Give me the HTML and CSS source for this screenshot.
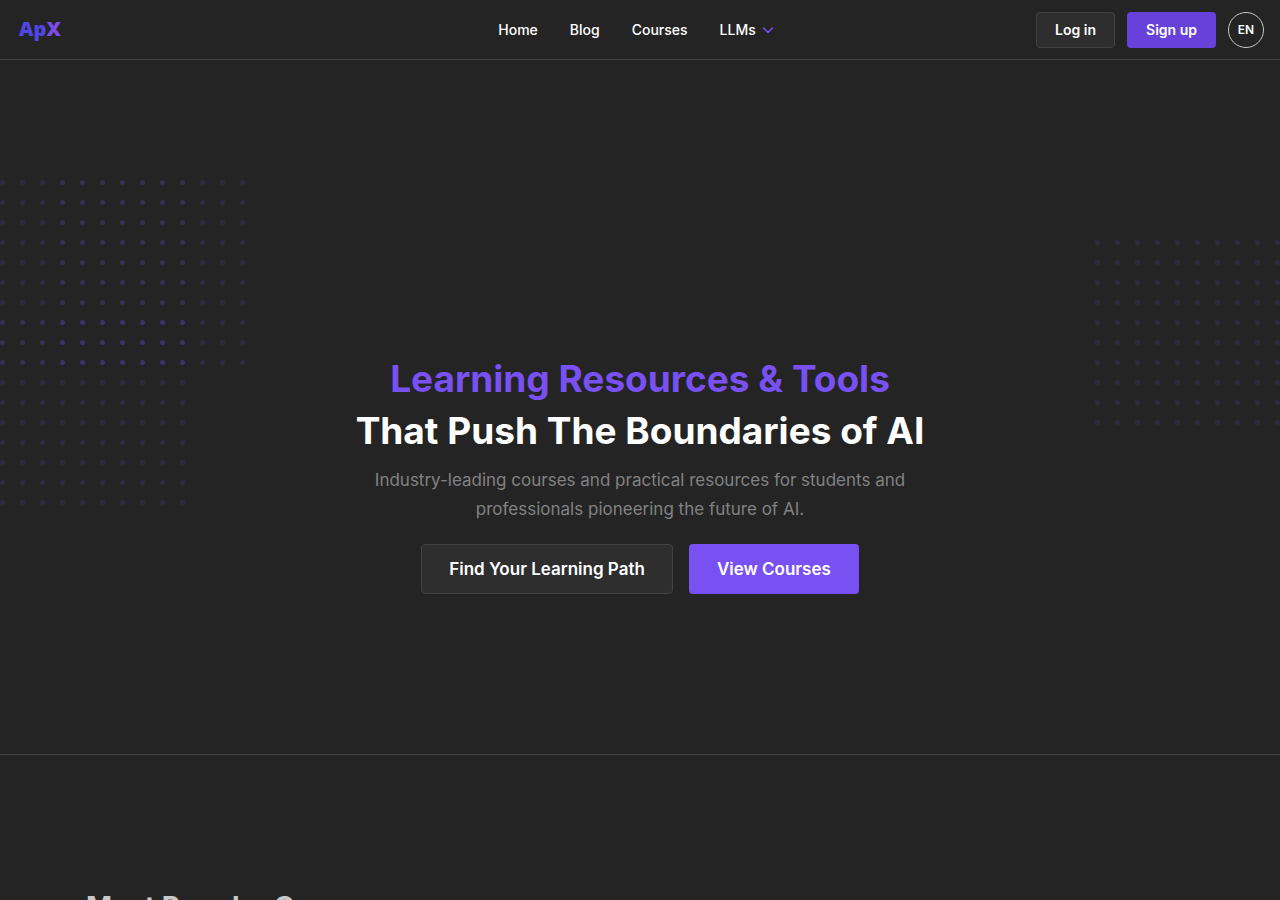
FILE: index.html
```
<!DOCTYPE html>
<html lang="en">

<head>
    <meta charset="UTF-8" />
    <meta name="viewport" content="width=device-width, initial-scale=1.0" />
    <title>ApX - Learning Resources &amp; Tools</title>
    <link rel="stylesheet" href="styles.css">
</head>

<body>
    <header class="header">
        <a class="logo" href="#">Ap<span class="logo-x">X</span></a>
        <nav class="nav">
            <a href="#">Home</a>
            <a href="#">Blog</a>
            <a href="#courses">Courses</a>
            <a class="has-menu" href="#">LLMs
                <svg width="16" height="16" viewBox="0 0 16 16" fill="none" stroke="#7950f2" stroke-width="1.5" stroke-linecap="round" stroke-linejoin="round" aria-hidden="true">
                    <path d="M3.5 6l4.5 4.5l4.5 -4.5" />
                </svg>
            </a>
        </nav>
        <div class="actions">
            <button class="btn btn-default" type="button">Log in</button>
            <button class="btn btn-signup" type="button">Sign up</button>
            <button class="lang" type="button" aria-label="Language: EN">EN</button>
        </div>
    </header>

    <main>
        <section class="hero">
            <!-- background dots -->
            <svg class="dots dots-1" width="185" height="185" aria-hidden="true">
                <defs>
                    <pattern id="dot" width="20" height="20" patternUnits="userSpaceOnUse">
                        <circle cx="2.5" cy="2.5" r="2.5" fill="#7950f2" />
                    </pattern>
                </defs>
                <rect width="185" height="185" fill="url(#dot)" />
            </svg>
            <svg class="dots dots-2" width="185" height="185" aria-hidden="true">
                <rect width="185" height="185" fill="url(#dot)" />
            </svg>
            <svg class="dots dots-3" width="185" height="185" aria-hidden="true">
                <rect width="185" height="185" fill="url(#dot)" />
            </svg>
            <svg class="dots dots-4" width="185" height="185" aria-hidden="true">
                <rect width="185" height="185" fill="url(#dot)" />
            </svg>

            <div class="hero-inner">
                <h1><span class="highlight">Learning Resources &amp; Tools</span><br>That Push The Boundaries of AI</h1>
                <p>Industry-leading courses and practical resources for students and professionals pioneering the future of AI.</p>
                <div class="controls">
                    <button class="btn btn-lg btn-default" type="button">Find Your Learning Path</button>
                    <button class="btn btn-lg btn-primary" type="button">View Courses</button>
                </div>
            </div>
        </section>

        <section class="popular" id="courses">
            <h2>Most Popular Courses</h2>
        </section>
    </main>
</body>

</html>
```
FILE: styles.css
```
* {
    box-sizing: border-box;
}

body {
    margin: 0;
    background-color: #242424;
    color: #fff;
    font-family: Inter, "Liberation Sans", sans-serif;
}

a {
    color: inherit;
    text-decoration: none;
}

button {
    font-family: inherit;
    cursor: pointer;
}

/* header */
.header {
    display: grid;
    grid-template-columns: 1fr auto 1fr;
    align-items: center;
    height: 60px;
    padding: 0 16px;
    border-bottom: 1px solid #424242;
}

.logo {
    justify-self: start;
    padding: 0 0 2px 3px;
    color: #4f46e5;
    font-family: "Noto Sans", sans-serif;
    font-size: 20px;
    font-weight: 900;
    line-height: 28px;
}

.logo-x {
    color: #7c4be8;
}

.nav {
    display: flex;
    align-items: center;
    gap: 32px;
    padding-right: 6px;
    font-size: 14px;
    font-weight: 500;
}

.has-menu {
    display: flex;
    align-items: center;
    gap: 4px;
}

.actions {
    display: flex;
    align-items: center;
    justify-content: flex-end;
    gap: 12px;
}

.btn {
    height: 36px;
    padding: 0 18px;
    border: 1px solid transparent;
    border-radius: 4px;
    color: #fff;
    font-size: 14px;
    font-weight: 600;
}

.btn-default {
    background-color: #2e2e2e;
    border-color: #424242;
}

.btn-signup {
    background-color: #6741d9;
}

.btn-primary {
    background-color: #7950f2;
}

.btn-lg {
    height: 50px;
    padding: 0 27px;
    font-size: 17px;
}

.lang {
    width: 36px;
    height: 36px;
    padding: 0;
    border: 1px solid #c9c9c9;
    border-radius: 50%;
    background: none;
    color: #fff;
    font-size: 12px;
    font-weight: 600;
}

/* hero */
.hero {
    position: relative;
    overflow: hidden;
    padding: 293px 16px 160px;
    border-bottom: 1px solid #424242;
}

.hero-inner {
    position: relative;
    max-width: 600px;
    margin: 0 auto;
    text-align: center;
}

.hero h1 {
    margin: 0;
    font-size: 37px;
    font-weight: 700;
    line-height: 52px;
}

.highlight {
    color: #7950f2;
}

.hero p {
    margin: 9px 0 20px;
    padding: 0 20px;
    color: #828282;
    font-size: 17px;
    line-height: 29px;
}

.controls {
    display: flex;
    justify-content: center;
    gap: 16px;
}

.dots {
    position: absolute;
    opacity: 0.12;
}

.dots-1 {
    top: 120px;
    left: 0;
}

.dots-2 {
    top: 120px;
    left: 60px;
}

.dots-3 {
    top: 260px;
    left: 0;
}

.dots-4 {
    top: 180px;
    right: 0;
}

/* popular courses */
.popular {
    max-width: 1140px;
    margin: 0 auto;
    padding: 134px 16px 80px;
}

.popular h2 {
    margin: 0;
    color: #c9c9c9;
    font-size: 28px;
    line-height: 36px;
}
```
